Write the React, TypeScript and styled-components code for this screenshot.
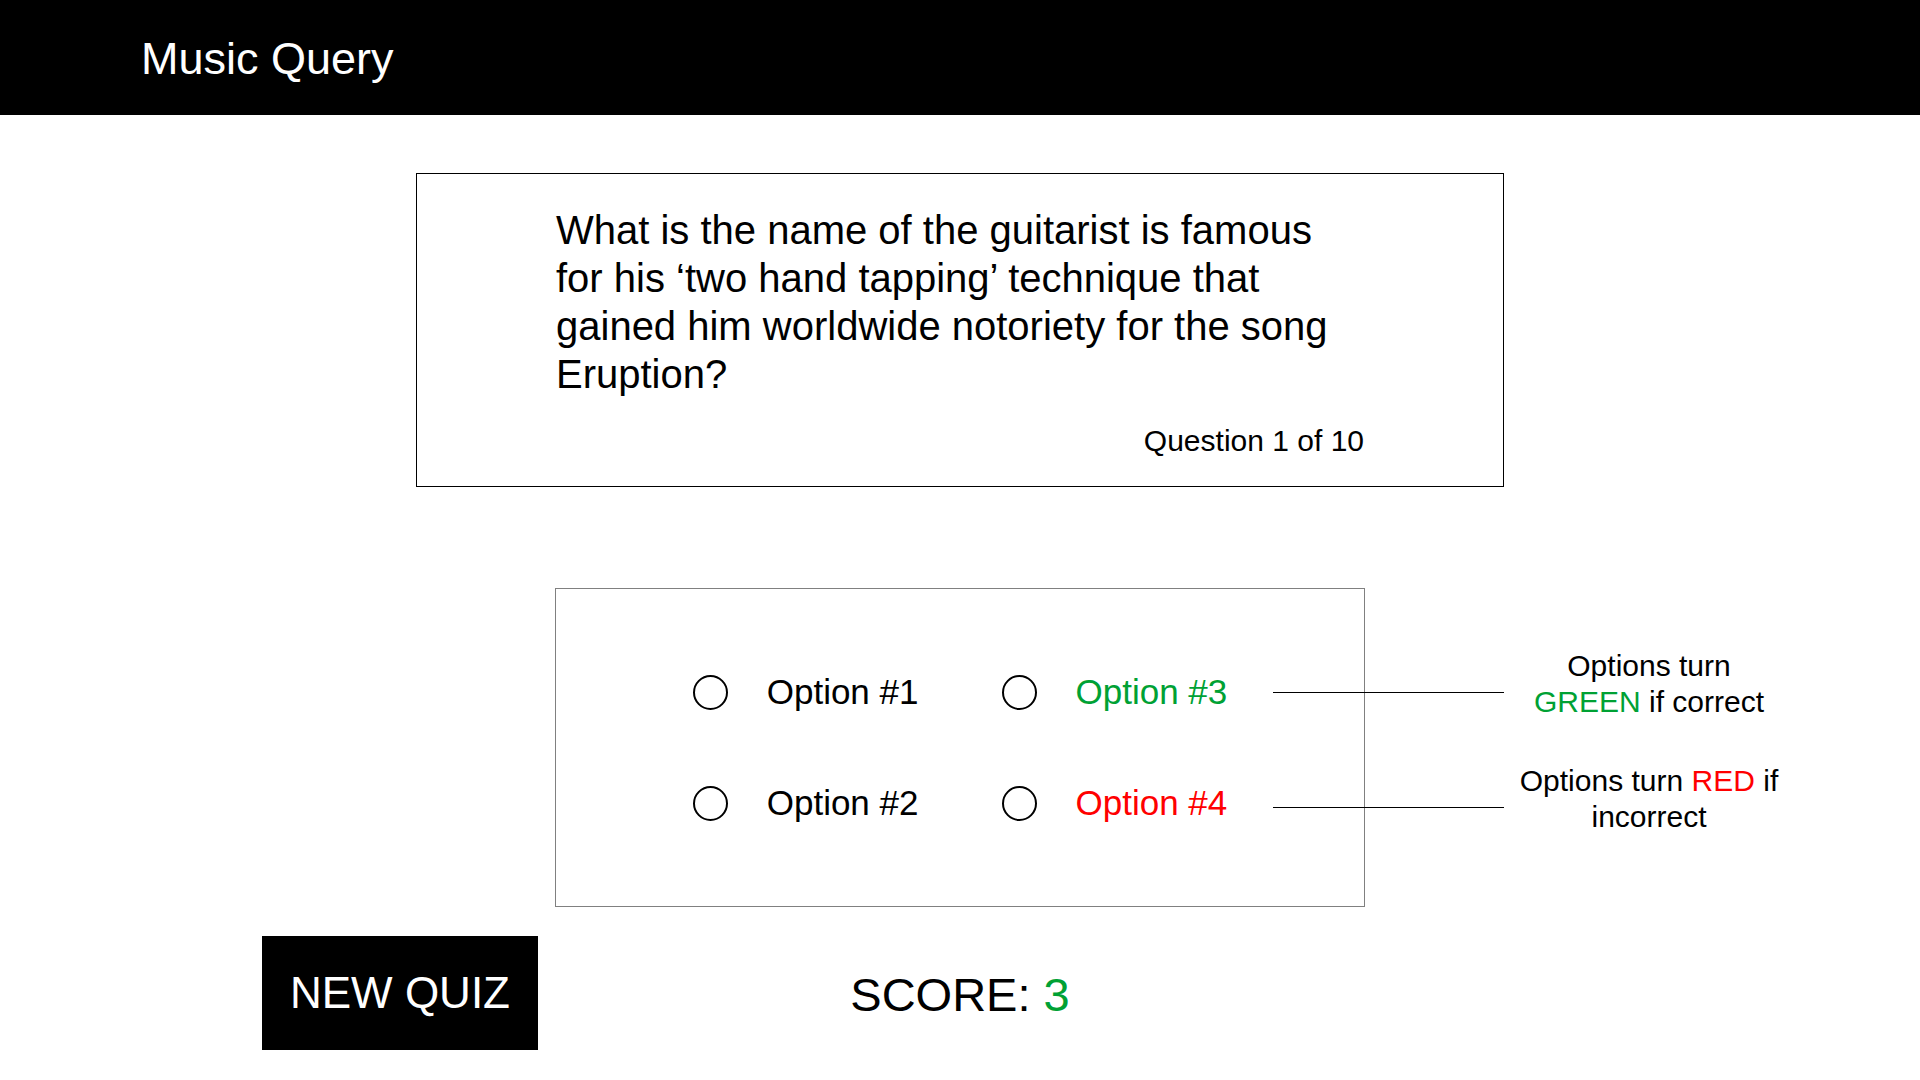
import styled, { createGlobalStyle } from "styled-components";

const GREEN = "#00a134";
const RED = "#ff0000";

const GlobalStyle = createGlobalStyle`
  body {
    margin: 0;
    background: #fff;
    font-family: "Liberation Sans", Arial, Helvetica, sans-serif;
    color: #000;
  }
`;

const Header = styled.header`
  height: 115px;
  background: #000;
  display: flex;
  align-items: center;
  padding-left: 141px;
`;

const Title = styled.h1`
  margin: 2px 0 0;
  color: #fff;
  font-size: 45px;
  font-weight: 400;
  line-height: 1;
`;

const Main = styled.main`
  display: flex;
  flex-direction: column;
  align-items: center;
  padding-top: 58px;
`;

const QuestionCard = styled.section`
  width: 1088px;
  box-sizing: border-box;
  border: 1px solid #000;
  padding: 32px 139px 27px;
  display: flex;
  flex-direction: column;
`;

const QuestionText = styled.p`
  margin: 0;
  font-size: 40px;
  line-height: 48px;
`;

const QuestionCount = styled.span`
  align-self: flex-end;
  margin-top: 25px;
  font-size: 30px;
  line-height: 36px;
`;

const OptionsArea = styled.div`
  position: relative;
  width: 810px;
  margin-top: 101px;
`;

const OptionsBox = styled.div`
  height: 319px;
  box-sizing: border-box;
  border: 1px solid #808080;
  display: grid;
  grid-template-columns: repeat(2, auto);
  grid-auto-rows: 44px;
  column-gap: 83px;
  row-gap: 67px;
  align-content: center;
  justify-content: center;
`;

const Option = styled.label<{ $color?: string }>`
  display: flex;
  align-items: center;
  gap: 39px;
  font-size: 35px;
  color: ${(p) => p.$color || "#000"};
  cursor: pointer;
`;

const Radio = styled.span`
  width: 35px;
  height: 35px;
  box-sizing: border-box;
  border: 2px solid #000;
  border-radius: 50%;
  flex-shrink: 0;
`;

const Annotations = styled.div`
  position: absolute;
  left: 718px;
  top: 60px;
  display: flex;
  flex-direction: column;
  gap: 43px;
`;

const Callout = styled.div`
  display: flex;
  height: 72px;
`;

const Connector = styled.div`
  width: 231px;
  height: 1px;
  margin-top: 44px;
  background: #000;
`;

const Note = styled.p`
  margin: 0;
  width: 290px;
  text-align: center;
  font-size: 30px;
  line-height: 36px;
`;

const Tint = styled.span<{ $color: string }>`
  color: ${(p) => p.$color};
`;

const BottomRow = styled.div`
  width: 100%;
  display: grid;
  grid-template-columns: 1fr auto 1fr;
  align-items: center;
  margin-top: 29px;
`;

const NewQuizButton = styled.button`
  justify-self: start;
  margin-left: 262px;
  width: 276px;
  height: 114px;
  background: #000;
  color: #fff;
  border: none;
  font-family: inherit;
  font-size: 44px;
  cursor: pointer;
`;

const Score = styled.div`
  font-size: 47px;
  line-height: 1;
  margin-top: 3px;
`;

const options = [
  { label: "Option #1" },
  { label: "Option #3", color: GREEN },
  { label: "Option #2" },
  { label: "Option #4", color: RED },
];

export default function App() {
  return (
    <>
      <GlobalStyle />
      <Header>
        <Title>Music Query</Title>
      </Header>
      <Main>
        <QuestionCard>
          <QuestionText>
            What is the name of the guitarist is famous for his ‘two hand
            tapping’ technique that gained him worldwide notoriety for the song
            Eruption?
          </QuestionText>
          <QuestionCount>Question 1 of 10</QuestionCount>
        </QuestionCard>

        <OptionsArea>
          <OptionsBox>
            {options.map((o) => (
              <Option key={o.label} $color={o.color}>
                <Radio />
                {o.label}
              </Option>
            ))}
          </OptionsBox>
          <Annotations>
            <Callout>
              <Connector />
              <Note>
                Options turn
                <br />
                <Tint $color={GREEN}>GREEN</Tint> if correct
              </Note>
            </Callout>
            <Callout>
              <Connector />
              <Note>
                Options turn <Tint $color={RED}>RED</Tint> if
                <br />
                incorrect
              </Note>
            </Callout>
          </Annotations>
        </OptionsArea>

        <BottomRow>
          <NewQuizButton>NEW QUIZ</NewQuizButton>
          <Score>
            SCORE: <Tint $color={GREEN}>3</Tint>
          </Score>
        </BottomRow>
      </Main>
    </>
  );
}
